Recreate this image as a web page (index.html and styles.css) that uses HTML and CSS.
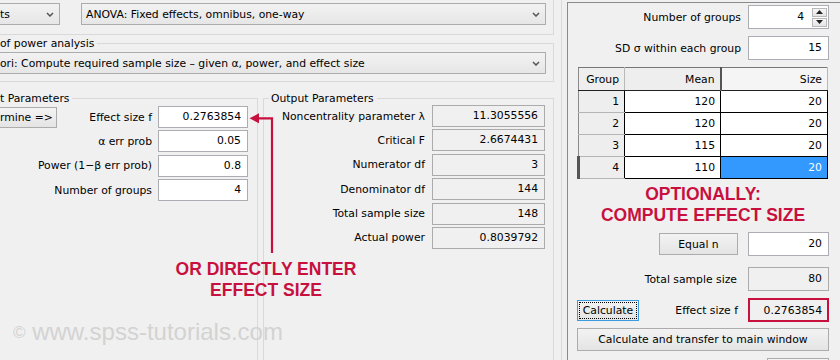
FILE: index.html
```html
<!DOCTYPE html>
<html lang="en">
<head>
    <meta charset="UTF-8">
    <meta name="viewport" content="width=device-width, initial-scale=1.0">
    <title>G*Power - ANOVA</title>
    <link rel="stylesheet" href="styles.css">
</head>
<body>

<div class="window">

    <!-- MAIN WINDOW -->
    <div class="main">
        <div class="family-box">
            <div class="select family">
                <span>ts</span>
                <svg class="chev" width="8" height="5" viewBox="0 0 8 5"><polyline points="1,1 4,4 7,1"/></svg>
            </div>
            <div class="select test">
                <span>ANOVA: Fixed effects, omnibus, one-way</span>
                <svg class="chev" width="8" height="5" viewBox="0 0 8 5"><polyline points="1,1 4,4 7,1"/></svg>
            </div>
        </div>

        <fieldset class="group type-group">
            <legend>of power analysis</legend>
            <div class="select analysis">
                <span>ori: Compute required sample size – given α, power, and effect size</span>
                <svg class="chev" width="8" height="5" viewBox="0 0 8 5"><polyline points="1,1 4,4 7,1"/></svg>
            </div>
        </fieldset>

        <div class="params">
            <fieldset class="group input-group">
                <legend>t Parameters</legend>
                <div class="param-grid">
                    <button class="btn determine">rmine =&gt;</button>
                    <label>Effect size f</label>
                    <div class="field">0.2763854</div>

                    <label class="wide">α err prob</label>
                    <div class="field">0.05</div>

                    <label class="wide">Power (1−β err prob)</label>
                    <div class="field">0.8</div>

                    <label class="wide">Number of groups</label>
                    <div class="field">4</div>
                </div>
            </fieldset>

            <fieldset class="group output-group">
                <legend>Output Parameters</legend>
                <div class="out-grid">
                    <label>Noncentrality parameter λ</label>
                    <div class="field ro">11.3055556</div>
                    <label>Critical F</label>
                    <div class="field ro">2.6674431</div>
                    <label>Numerator df</label>
                    <div class="field ro">3</div>
                    <label>Denominator df</label>
                    <div class="field ro">144</div>
                    <label>Total sample size</label>
                    <div class="field ro">148</div>
                    <label>Actual power</label>
                    <div class="field ro">0.8039792</div>
                </div>
            </fieldset>
        </div>
    </div>

    <div class="divider"></div>

    <!-- EFFECT SIZE DIALOG -->
    <div class="side">
        <div class="side-row">
            <label>Number of groups</label>
            <div class="field spin">
                <span>4</span>
                <div class="spinner">
                    <div class="spin-btn"><svg width="7" height="4" viewBox="0 0 7 4"><polygon points="0,4 3.5,0 7,4"/></svg></div>
                    <div class="spin-btn"><svg width="7" height="4" viewBox="0 0 7 4"><polygon points="0,0 3.5,4 7,0"/></svg></div>
                </div>
            </div>
        </div>
        <div class="side-row sd-row">
            <label>SD σ within each group</label>
            <div class="field">15</div>
        </div>

        <table class="groups">
            <thead>
                <tr><th class="col-group">Group</th><th class="col-mean">Mean</th><th class="col-size">Size</th></tr>
            </thead>
            <tbody>
                <tr><td class="gid">1</td><td>120</td><td>20</td></tr>
                <tr><td class="gid">2</td><td>120</td><td>20</td></tr>
                <tr><td class="gid">3</td><td>115</td><td>20</td></tr>
                <tr class="current"><td class="gid">4</td><td>110</td><td class="selected">20</td></tr>
            </tbody>
        </table>

        <div class="note">OPTIONALLY:<br>COMPUTE EFFECT SIZE</div>

        <div class="side-row equal-row">
            <button class="btn equal">Equal n</button>
            <div class="field">20</div>
        </div>
        <div class="side-row total-row">
            <label>Total sample size</label>
            <div class="field ro">80</div>
        </div>
        <div class="calc-row">
            <button class="btn calc">Calculate</button>
            <div class="side-row">
                <label>Effect size f</label>
                <div class="field ro result">0.2763854</div>
            </div>
        </div>
        <button class="btn transfer">Calculate and transfer to main window</button>
        <button class="btn close"></button>
    </div>

    <!-- ANNOTATIONS -->
    <svg class="arrow" width="28" height="146" viewBox="0 0 28 146">
        <path d="M10 8.3 H24 V143"/>
        <polygon points="1.5,8.3 11,3.3 11,13.3"/>
    </svg>
    <div class="note left-note">OR DIRECTLY ENTER<br>EFFECT SIZE</div>
    <div class="watermark"><span class="copy">©</span> www.spss-tutorials.com</div>
</div>

</body>
</html>
```

FILE: styles.css
```css
* {
    box-sizing: border-box;
}
body {
    margin: 0;
    background: #f0f0f0;
    font-family: "DejaVu Sans", sans-serif;
    font-size: 10.8px;
    color: #000;
    overflow: hidden;
}
.window {
    position: relative;
    display: flex;
    width: 840px;
    height: 360px;
    overflow: hidden;
}
.main {
    flex: none;
    width: 555px;
}
.family-box {
    display: flex;
    align-items: flex-start;
    width: 554px;
    height: 35px;
    padding-top: 3px;
    border-right: 1px solid #d9d9d9;
    border-bottom: 1px solid #d9d9d9;
}
.select {
    display: flex;
    align-items: center;
    justify-content: space-between;
    height: 22px;
    padding: 0 5px 0 4px;
    border: 1px solid #acacac;
    background: linear-gradient(#f2f2f2, #e6e6e6);
    white-space: nowrap;
}
.chev polyline {
    fill: none;
    stroke: #555;
    stroke-width: 1.5;
}
.select.family {
    width: 60px;
    border-left: none;
    padding-left: 0;
}
.select.test {
    width: 465px;
    margin-left: 21px;
}
.select.analysis {
    width: 546px;
    border-left: none;
    padding-left: 0;
}
.group {
    min-width: 0;
    margin: 0;
    border: 1px solid #d9d9d9;
}
.group legend {
    padding: 0 3px 0 0;
    line-height: 13px;
}
.type-group {
    width: 554px;
    margin-top: 2px;
    padding: 2px 0 7px 0;
    border-left: none;
}
.params {
    display: flex;
    gap: 5px;
    margin-top: 10px;
}
.input-group {
    flex: none;
    width: 258px;
    height: 300px;
    padding: 1px 9px 0 0;
    border-left: none;
}
.output-group {
    flex: none;
    width: 291px;
    height: 300px;
    padding: 0 8px 0 5px;
}
.output-group legend {
    padding: 0 3px 0 2px;
}
.param-grid {
    display: grid;
    grid-template-columns: 57px minmax(0, 1fr) 90px;
    grid-auto-rows: 22px;
    row-gap: 2.4px;
    column-gap: 6px;
    align-items: center;
}
.param-grid .wide {
    grid-column: 1 / 3;
}
.out-grid {
    display: grid;
    grid-template-columns: minmax(0, 1fr) 113px;
    grid-auto-rows: 22px;
    row-gap: 2.4px;
    column-gap: 7px;
    align-items: center;
}
label {
    text-align: right;
    white-space: nowrap;
}
.field {
    height: 22px;
    padding-right: 6px;
    border: 1px solid #abadb3;
    background: #fff;
    text-align: right;
    line-height: 20px;
}
.field.ro {
    background: #f0f0f0;
    border-color: #ababab;
}
.btn {
    font: inherit;
    color: #000;
    border: 1px solid #acacac;
    background: linear-gradient(#f3f3f3, #e4e4e4);
    padding: 0;
}
.determine {
    height: 21px;
    border-left: none;
    text-align: left;
}

/* effect size dialog */
.divider {
    flex: none;
    width: 6px;
    margin-left: 6px;
    border-left: 1px solid #dadada;
}
.side {
    flex: none;
    width: 273px;
    margin-top: 2px;
    padding: 2px 11px 0 9px;
    border-left: 1px solid #8a8a8a;
    border-top: 1px solid #8a8a8a;
}
.side-row {
    display: flex;
    justify-content: flex-end;
    align-items: center;
    gap: 7px;
}
.side-row .field {
    width: 81px;
    height: 24px;
    line-height: 22px;
}
.sd-row {
    margin-top: 7px;
}
.field.spin {
    display: flex;
    justify-content: flex-end;
    align-items: center;
    gap: 8px;
    padding-right: 1px;
}
.spinner {
    display: flex;
    flex-direction: column;
    gap: 1px;
}
.spin-btn {
    display: flex;
    align-items: center;
    justify-content: center;
    width: 15px;
    height: 9px;
    border: 1px solid #b8b8b8;
    background: linear-gradient(#f6f6f6, #e4e4e4);
}
.spin-btn polygon {
    fill: #222;
}
.groups {
    width: 251px;
    margin-top: 7px;
    border-collapse: collapse;
    table-layout: fixed;
    border-top: 1px solid #777;
    border-left: 1px solid #8a8a8a;
}
.groups th,
.groups td {
    padding: 0 5px 0 0;
    text-align: right;
    font-weight: normal;
}
.groups th {
    height: 23px;
    background: #eeeeee;
    border-right: 1px solid #b9b9b9;
    border-bottom: 1px solid #222;
}
.groups th.col-mean {
    border-right: 2px solid #555;
}
.groups th.col-size {
    background: #f5f5f5;
}
.col-group {
    width: 46px;
}
.col-mean {
    width: 96px;
}
.groups td {
    height: 22px;
    background: #fff;
    border: 1px solid #000;
}
.groups td.gid {
    background: #eeeeee;
    border-top-color: #b5b5b5;
    border-bottom-color: #b5b5b5;
    border-left: 1px solid #8a8a8a;
}
.groups tr.current td.gid {
    border-left: 3px solid #555;
}
.groups td.selected {
    background: #3399ff;
    color: #fff;
}
.note {
    color: #c8103f;
    font-family: "Liberation Sans", Arial, sans-serif;
    font-weight: bold;
    font-size: 17.5px;
    line-height: 21px;
    text-align: center;
}
.side .note {
    margin-top: 5px;
}
.equal-row {
    margin-top: 6px;
    gap: 10px;
}
.equal {
    width: 79px;
    height: 22px;
}
.total-row {
    margin-top: 11px;
    gap: 11px;
}
.calc-row {
    display: flex;
    justify-content: space-between;
    align-items: center;
    margin-top: 7px;
}
.calc-row .side-row {
    gap: 10px;
}
.calc {
    width: 62px;
    height: 21px;
    border-color: #3c9be0;
    outline: 1px dotted #000;
    outline-offset: -3px;
}
.field.result {
    border: 2px solid #c8103f;
    padding-right: 5px;
}
.transfer {
    display: block;
    width: 252px;
    height: 23px;
    margin-top: 6px;
}
.close {
    display: block;
    width: 62px;
    height: 22px;
    margin: 7px 0 0 auto;
}

/* annotations over the screenshot */
.arrow {
    position: absolute;
    left: 248px;
    top: 110px;
}
.arrow path {
    fill: none;
    stroke: #c8103f;
    stroke-width: 2.2;
}
.arrow polygon {
    fill: #c8103f;
}
.left-note {
    position: absolute;
    left: 146px;
    top: 259px;
    width: 240px;
}
.watermark {
    position: absolute;
    left: 13px;
    top: 318px;
    font-family: "Liberation Sans", Arial, sans-serif;
    font-size: 24px;
    line-height: 28px;
    color: #d3d3d3;
    white-space: nowrap;
}
.watermark .copy {
    font-size: 17px;
    vertical-align: 2px;
}
```
